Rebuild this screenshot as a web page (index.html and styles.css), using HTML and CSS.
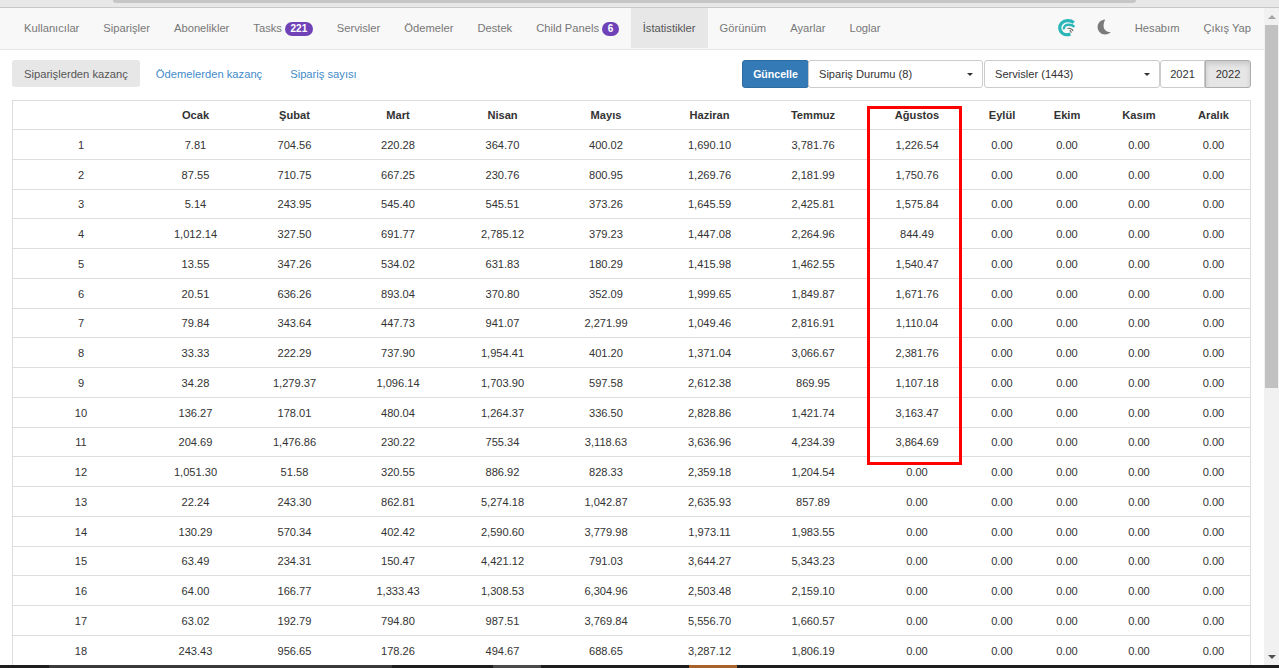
FILE: index.html
```html
<!DOCTYPE html>
<html lang="tr">
<head>
    <meta charset="UTF-8">
    <title>İstatistikler</title>
    <link rel="stylesheet" href="styles.css">
</head>
<body>
    <div class="browser-strip"><div class="browser-tab"></div></div>

    <div class="window">
        <div class="page">
            <nav class="navbar">
                <ul class="nav-list">
                    <li><a href="#">Kullanıcılar</a></li>
                    <li><a href="#">Siparişler</a></li>
                    <li><a href="#">Abonelikler</a></li>
                    <li><a href="#">Tasks <span class="badge">221</span></a></li>
                    <li><a href="#">Servisler</a></li>
                    <li><a href="#">Ödemeler</a></li>
                    <li><a href="#">Destek</a></li>
                    <li><a href="#">Child Panels <span class="badge">6</span></a></li>
                    <li class="active"><a href="#">İstatistikler</a></li>
                    <li><a href="#">Görünüm</a></li>
                    <li><a href="#">Ayarlar</a></li>
                    <li><a href="#">Loglar</a></li>
                </ul>
                <ul class="nav-list nav-right">
                    <li class="nav-icon">
                        <svg width="18" height="18" viewBox="0 0 18 18">
                            <path d="M15.8 3.6 C12.6 0.8 6.6 1 3.6 4.2 C0.8 7.2 1.2 12 4.4 14.2 C6.8 15.9 10 16 12.4 15" fill="none" stroke="#2bb6ba" stroke-width="3.2"/>
                            <path d="M6 10.4 C5.4 8 7.2 6 10 5.8 C12.6 5.6 15 6.4 16.4 7.8" fill="none" stroke="#2bb6ba" stroke-width="2.4"/>
                            <path d="M9.5 9.6 C11.5 8.8 14.4 9.8 15 12 M11.6 11.6 C12.6 11.4 13.2 12.4 13 13.8" fill="none" stroke="#666" stroke-width="1.1"/>
                        </svg>
                    </li>
                    <li class="nav-icon nav-moon">
                        <svg width="15" height="16" viewBox="0 0 15 16">
                            <path d="M8.2 0.4 C3.8 0.6 0.6 3.8 0.6 7.9 C0.6 12.1 4 15.4 8.2 15.4 C10.4 15.4 12.4 14.5 13.8 13 C10.4 13.4 6.8 11 6.6 7.4 C6.4 4.6 7.4 2 8.2 0.4 Z" fill="#7a7a7a"/>
                        </svg>
                    </li>
                    <li><a href="#">Hesabım</a></li>
                    <li><a href="#">Çıkış Yap</a></li>
                </ul>
            </nav>

            <main class="content">
                <div class="toolbar">
                    <ul class="tabs">
                        <li class="active"><a href="#">Siparişlerden kazanç</a></li>
                        <li><a href="#">Ödemelerden kazanç</a></li>
                        <li><a href="#">Sipariş sayısı</a></li>
                    </ul>
                    <div class="filters">
                        <button class="btn btn-primary">Güncelle</button>
                        <button class="btn btn-select select-status">Sipariş Durumu (8)<span class="caret"></span></button>
                        <button class="btn btn-select select-services">Servisler (1443)<span class="caret"></span></button>
                        <div class="year-group">
                            <button class="btn btn-year">2021</button>
                            <button class="btn btn-year active">2022</button>
                        </div>
                    </div>
                </div>

                <div class="table-wrap">
                    <div class="highlight"></div>
                    <table class="stats-table">
                        <colgroup>
                            <col class="col-day"><col class="col-ocak"><col class="col-subat"><col class="col-mart">
                            <col class="col-nisan"><col class="col-mayis"><col class="col-haziran"><col class="col-temmuz">
                            <col class="col-agustos"><col class="col-eylul"><col class="col-ekim"><col class="col-kasim"><col class="col-aralik">
                        </colgroup>
                        <thead>
                            <tr><th></th><th>Ocak</th><th>Şubat</th><th>Mart</th><th>Nisan</th><th>Mayıs</th><th>Haziran</th><th>Temmuz</th><th>Ağustos</th><th>Eylül</th><th>Ekim</th><th>Kasım</th><th>Aralık</th></tr>
                        </thead>
                        <tbody>
                            <tr><td>1</td><td>7.81</td><td>704.56</td><td>220.28</td><td>364.70</td><td>400.02</td><td>1,690.10</td><td>3,781.76</td><td>1,226.54</td><td>0.00</td><td>0.00</td><td>0.00</td><td>0.00</td></tr>
                            <tr><td>2</td><td>87.55</td><td>710.75</td><td>667.25</td><td>230.76</td><td>800.95</td><td>1,269.76</td><td>2,181.99</td><td>1,750.76</td><td>0.00</td><td>0.00</td><td>0.00</td><td>0.00</td></tr>
                            <tr><td>3</td><td>5.14</td><td>243.95</td><td>545.40</td><td>545.51</td><td>373.26</td><td>1,645.59</td><td>2,425.81</td><td>1,575.84</td><td>0.00</td><td>0.00</td><td>0.00</td><td>0.00</td></tr>
                            <tr><td>4</td><td>1,012.14</td><td>327.50</td><td>691.77</td><td>2,785.12</td><td>379.23</td><td>1,447.08</td><td>2,264.96</td><td>844.49</td><td>0.00</td><td>0.00</td><td>0.00</td><td>0.00</td></tr>
                            <tr><td>5</td><td>13.55</td><td>347.26</td><td>534.02</td><td>631.83</td><td>180.29</td><td>1,415.98</td><td>1,462.55</td><td>1,540.47</td><td>0.00</td><td>0.00</td><td>0.00</td><td>0.00</td></tr>
                            <tr><td>6</td><td>20.51</td><td>636.26</td><td>893.04</td><td>370.80</td><td>352.09</td><td>1,999.65</td><td>1,849.87</td><td>1,671.76</td><td>0.00</td><td>0.00</td><td>0.00</td><td>0.00</td></tr>
                            <tr><td>7</td><td>79.84</td><td>343.64</td><td>447.73</td><td>941.07</td><td>2,271.99</td><td>1,049.46</td><td>2,816.91</td><td>1,110.04</td><td>0.00</td><td>0.00</td><td>0.00</td><td>0.00</td></tr>
                            <tr><td>8</td><td>33.33</td><td>222.29</td><td>737.90</td><td>1,954.41</td><td>401.20</td><td>1,371.04</td><td>3,066.67</td><td>2,381.76</td><td>0.00</td><td>0.00</td><td>0.00</td><td>0.00</td></tr>
                            <tr><td>9</td><td>34.28</td><td>1,279.37</td><td>1,096.14</td><td>1,703.90</td><td>597.58</td><td>2,612.38</td><td>869.95</td><td>1,107.18</td><td>0.00</td><td>0.00</td><td>0.00</td><td>0.00</td></tr>
                            <tr><td>10</td><td>136.27</td><td>178.01</td><td>480.04</td><td>1,264.37</td><td>336.50</td><td>2,828.86</td><td>1,421.74</td><td>3,163.47</td><td>0.00</td><td>0.00</td><td>0.00</td><td>0.00</td></tr>
                            <tr><td>11</td><td>204.69</td><td>1,476.86</td><td>230.22</td><td>755.34</td><td>3,118.63</td><td>3,636.96</td><td>4,234.39</td><td>3,864.69</td><td>0.00</td><td>0.00</td><td>0.00</td><td>0.00</td></tr>
                            <tr><td>12</td><td>1,051.30</td><td>51.58</td><td>320.55</td><td>886.92</td><td>828.33</td><td>2,359.18</td><td>1,204.54</td><td>0.00</td><td>0.00</td><td>0.00</td><td>0.00</td><td>0.00</td></tr>
                            <tr><td>13</td><td>22.24</td><td>243.30</td><td>862.81</td><td>5,274.18</td><td>1,042.87</td><td>2,635.93</td><td>857.89</td><td>0.00</td><td>0.00</td><td>0.00</td><td>0.00</td><td>0.00</td></tr>
                            <tr><td>14</td><td>130.29</td><td>570.34</td><td>402.42</td><td>2,590.60</td><td>3,779.98</td><td>1,973.11</td><td>1,983.55</td><td>0.00</td><td>0.00</td><td>0.00</td><td>0.00</td><td>0.00</td></tr>
                            <tr><td>15</td><td>63.49</td><td>234.31</td><td>150.47</td><td>4,421.12</td><td>791.03</td><td>3,644.27</td><td>5,343.23</td><td>0.00</td><td>0.00</td><td>0.00</td><td>0.00</td><td>0.00</td></tr>
                            <tr><td>16</td><td>64.00</td><td>166.77</td><td>1,333.43</td><td>1,308.53</td><td>6,304.96</td><td>2,503.48</td><td>2,159.10</td><td>0.00</td><td>0.00</td><td>0.00</td><td>0.00</td><td>0.00</td></tr>
                            <tr><td>17</td><td>63.02</td><td>192.79</td><td>794.80</td><td>987.51</td><td>3,769.84</td><td>5,556.70</td><td>1,660.57</td><td>0.00</td><td>0.00</td><td>0.00</td><td>0.00</td><td>0.00</td></tr>
                            <tr><td>18</td><td>243.43</td><td>956.65</td><td>178.26</td><td>494.67</td><td>688.65</td><td>3,287.12</td><td>1,806.19</td><td>0.00</td><td>0.00</td><td>0.00</td><td>0.00</td><td>0.00</td></tr>
                        </tbody>
                    </table>
                </div>
            </main>
        </div>

        <div class="scrollbar">
            <div class="scroll-arrow arrow-up"></div>
            <div class="scroll-track"><div class="scroll-thumb"></div></div>
            <div class="scroll-arrow arrow-down"></div>
        </div>
    </div>

    <div class="taskbar">
        <div class="task task-window"></div>
        <div class="task task-gray"></div>
        <div class="task task-orange"></div>
    </div>
</body>
</html>
```

FILE: styles.css
```css
html, body {
    height: 100%;
}

body {
    margin: 0;
    display: flex;
    flex-direction: column;
    height: 668px;
    overflow: hidden;
    background-color: #fff;
    font-family: "Liberation Sans", Arial, sans-serif;
    font-size: 11.1px;
    color: #333;
}

a {
    text-decoration: none;
}

ul {
    list-style: none;
    margin: 0;
    padding: 0;
}

.browser-strip {
    flex: 0 0 8px;
    box-sizing: border-box;
    background-color: #e8e8e8;
    border-bottom: 1px solid #c8c8c8;
    padding: 0 143px 0 113px;
}

.browser-tab {
    height: 3px;
    background-color: #c6c6c6;
    border-radius: 0 0 3px 3px;
}

.window {
    flex: 1;
    display: flex;
    min-height: 0;
}

.page {
    flex: 1;
    min-width: 0;
    overflow: hidden;
}

/* navbar */
.navbar {
    display: flex;
    justify-content: space-between;
    height: 41px;
    background-color: #f8f8f8;
    border-bottom: 1px solid #e7e7e7;
    padding: 0 1px 0 12px;
}

.nav-list {
    display: flex;
}

.nav-list li {
    display: flex;
    align-items: center;
    height: 40px;
}

.nav-list a {
    display: block;
    padding: 0 12px;
    font-size: 11.2px;
    line-height: 40px;
    color: #777;
    white-space: nowrap;
}

.nav-list .active {
    background-color: #e7e7e7;
}

.nav-list .active a {
    color: #555;
}

.badge {
    display: inline-block;
    min-width: 5px;
    padding: 2px 5.5px;
    border-radius: 10px;
    background-color: #6f42b8;
    color: #fff;
    font-size: 10px;
    font-weight: bold;
    line-height: 10px;
}

.nav-icon {
    width: 18px;
    justify-content: center;
    margin-right: 21px;
}

.nav-moon {
    width: 15px;
    margin-right: 11px;
    padding-bottom: 3px;
    box-sizing: border-box;
}

/* toolbar */
.content {
    padding: 10px 13px 0 12px;
}

.toolbar {
    display: flex;
    justify-content: space-between;
    align-items: flex-start;
    height: 40px;
}

.tabs {
    display: flex;
    gap: 4px;
}

.tabs a {
    display: block;
    padding: 0 12px;
    height: 27px;
    font-size: 11.2px;
    line-height: 28px;
    border-radius: 3px;
    color: #428bca;
}

.tabs .active a {
    background-color: #e7e7e7;
    color: #555;
}

.filters {
    display: flex;
}

.btn {
    box-sizing: border-box;
    height: 28px;
    padding: 0 10px;
    border: 1px solid #ccc;
    border-radius: 3px;
    background-color: #fff;
    font-family: inherit;
    font-size: 11.1px;
    color: #333;
}

.btn-primary {
    width: 67px;
    padding: 0;
    background-color: #337ab7;
    border-color: #2e6da4;
    color: #fff;
    font-size: 10.6px;
    font-weight: bold;
}

.btn-select {
    position: relative;
    text-align: left;
}

.select-status {
    width: 175px;
    margin-left: -1px;
}

.select-services {
    width: 176px;
    margin-left: 1px;
}

.caret {
    position: absolute;
    right: 9px;
    top: 12px;
    border-top: 3px solid #333;
    border-left: 3px solid transparent;
    border-right: 3px solid transparent;
}

.year-group {
    display: flex;
}

.btn-year {
    width: 45px;
    padding: 0;
    border-radius: 3px 0 0 3px;
}

.btn-year.active {
    width: 46px;
    border-radius: 0 3px 3px 0;
    background-color: #e6e6e6;
    border-color: #adadad;
    box-shadow: inset 0 3px 5px rgba(0, 0, 0, 0.125);
}

/* table */
.table-wrap {
    position: relative;
    border: solid #ddd;
    border-width: 1px 1px 0;
}

.highlight {
    position: absolute;
    left: 854px;
    top: 5px;
    width: 95px;
    height: 359px;
    box-sizing: border-box;
    border: 3px solid #f00;
    z-index: 1;
}

.stats-table {
    width: 100%;
    table-layout: fixed;
    border-collapse: separate;
    border-spacing: 0;
    color: #333;
}

.stats-table th,
.stats-table td {
    height: 29.76px;
    box-sizing: border-box;
    padding: 1.2px 4px 0;
    text-align: center;
    border-bottom: 1px solid #ddd;
}

.stats-table th {
    height: 29px;
    padding-top: 0;
    color: #333;
}

.col-day { width: 136px; }
.col-ocak { width: 93px; }
.col-subat { width: 105px; }
.col-mart { width: 102px; }
.col-nisan { width: 107px; }
.col-mayis { width: 100px; }
.col-haziran { width: 107px; }
.col-temmuz { width: 100px; }
.col-agustos { width: 108px; }
.col-eylul { width: 62px; }
.col-ekim { width: 68px; }
.col-kasim { width: 76px; }
.col-aralik { width: 73px; }

/* scrollbar */
.scrollbar {
    flex: 0 0 15px;
    display: flex;
    flex-direction: column;
    background-color: #f1f1f1;
}

.scroll-track {
    flex: 1;
}

.scroll-thumb {
    height: 363px;
    margin: 0 1px;
    background-color: #c1c1c1;
}

.scroll-arrow {
    flex: 0 0 17px;
    display: flex;
    align-items: center;
    justify-content: center;
}

.arrow-up::before,
.arrow-down::before {
    content: "";
    border-left: 4px solid transparent;
    border-right: 4px solid transparent;
}

.arrow-up::before {
    border-bottom: 4px solid #a3a3a3;
}

.arrow-down::before {
    border-top: 4px solid #505050;
}

/* bottom strip */
.taskbar {
    flex: 0 0 3px;
    display: flex;
    background-color: #1d1d1d;
    padding-left: 49px;
}

.task-window {
    width: 343px;
    background-color: #3a3a3a;
}

.task-gray {
    width: 48px;
    margin-left: 101px;
    background-color: #4a4a4a;
}

.task-orange {
    width: 48px;
    margin-left: 148px;
    background-color: #a8622a;
}
```
